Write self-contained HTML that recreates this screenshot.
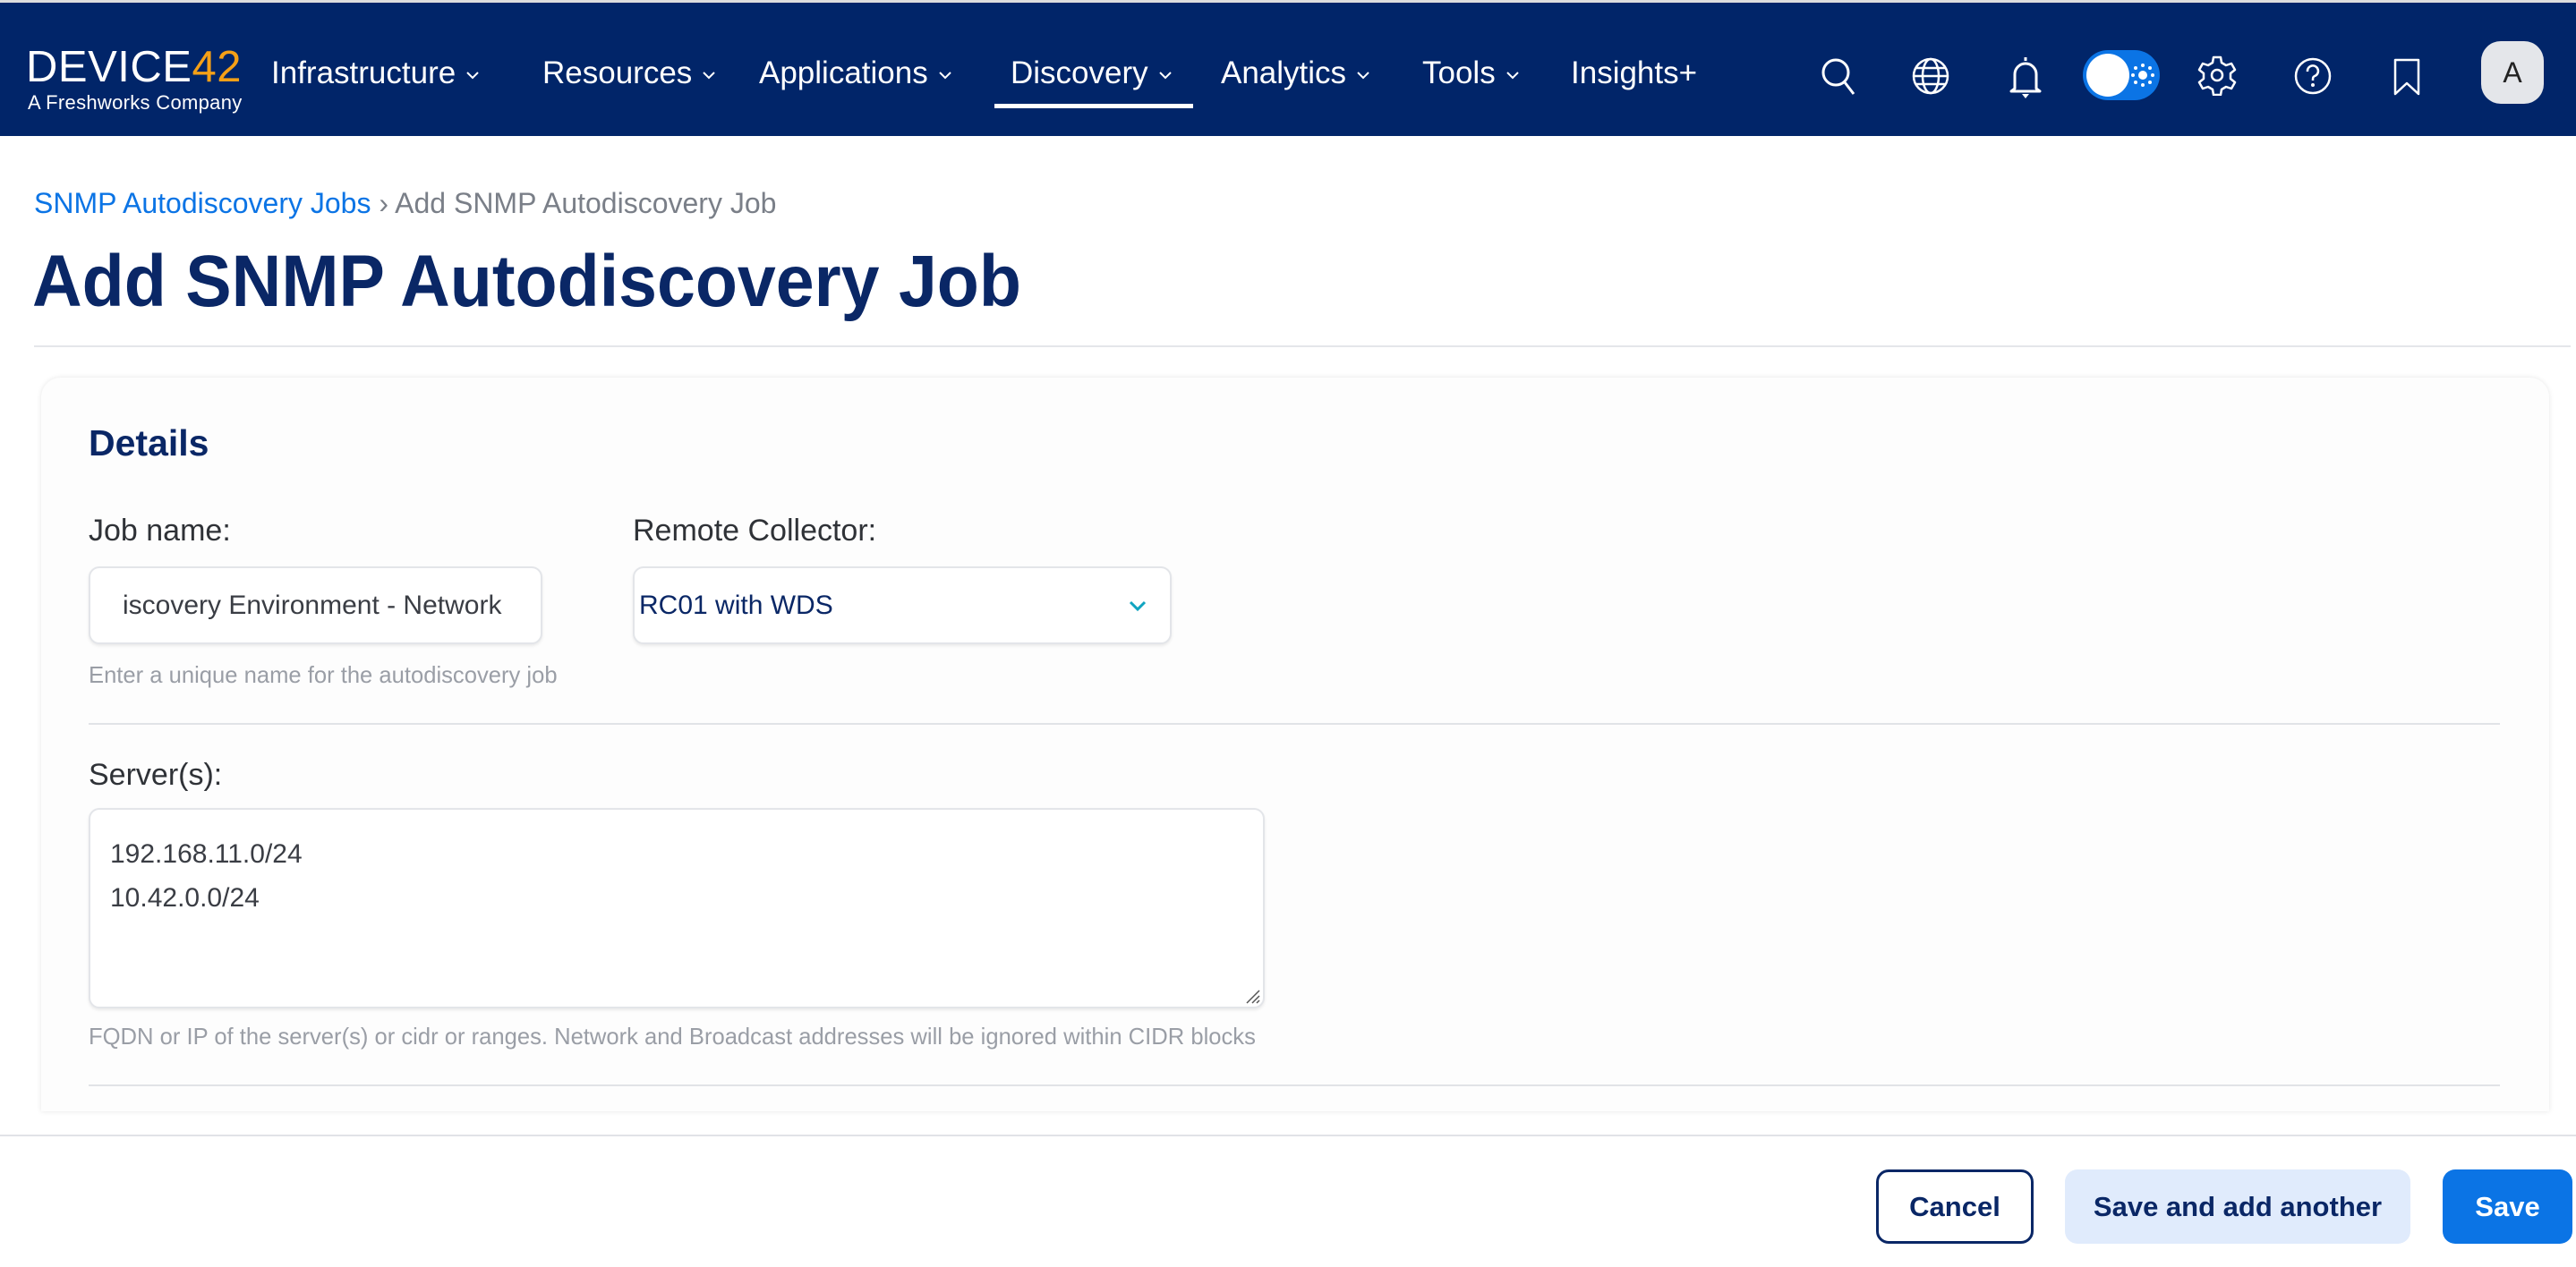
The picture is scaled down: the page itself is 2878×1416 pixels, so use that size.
<!DOCTYPE html>
<html><head><meta charset="utf-8"><style>
*{box-sizing:border-box;margin:0;padding:0}
body{width:2878px;height:1416px;overflow:hidden;background:#fff;font-family:"Liberation Sans",sans-serif;position:relative}
.a{position:absolute;white-space:nowrap}
.nav{position:absolute;left:0;top:3px;width:2878px;height:149px;background:#012569}
.ni{position:absolute;top:54px;color:#fff;font-size:35px;line-height:50px}
.ni svg{margin-left:10px;vertical-align:middle}
.ic{position:absolute;top:62px}
.lbl{color:#2f3237;font-size:34px}
.hint{color:#9a9ea6;font-size:25.6px}
.box{position:absolute;background:#fff;border:2px solid #e3e5e9;border-radius:12px;box-shadow:0 2px 3px rgba(0,0,0,.08)}
.div{position:absolute;height:2px;background:#e1e3e7}
.btn{position:absolute;top:1307px;height:83px;border-radius:14px;font-size:31px;font-weight:bold;line-height:83px;text-align:center}
</style></head><body>
<div class="a" style="left:0;top:0;width:2878px;height:3px;background:#ddd"></div>
<div class="nav">
  <div class="a" style="left:29px;top:48px;font-size:49px;color:#fff;letter-spacing:0.5px;line-height:49px">DEVICE<span style="color:#f5a017">42</span></div>
  <div class="a" style="left:31px;top:99px;font-size:22px;color:#fff;letter-spacing:0.3px">A Freshworks Company</div>
  <div class="ni" style="left:303px">Infrastructure<svg width="18" height="12" viewBox="0 0 18 12"><path d="M3 3l6 6 6-6" stroke="#fff" stroke-width="2" fill="none"/></svg></div>
  <div class="ni" style="left:606px">Resources<svg width="18" height="12" viewBox="0 0 18 12"><path d="M3 3l6 6 6-6" stroke="#fff" stroke-width="2" fill="none"/></svg></div>
  <div class="ni" style="left:848px">Applications<svg width="18" height="12" viewBox="0 0 18 12"><path d="M3 3l6 6 6-6" stroke="#fff" stroke-width="2" fill="none"/></svg></div>
  <div class="ni" style="left:1129px">Discovery<svg width="18" height="12" viewBox="0 0 18 12"><path d="M3 3l6 6 6-6" stroke="#fff" stroke-width="2" fill="none"/></svg></div>
  <div class="a" style="left:1111px;top:113px;width:222px;height:5px;background:#fff"></div>
  <div class="ni" style="left:1364px">Analytics<svg width="18" height="12" viewBox="0 0 18 12"><path d="M3 3l6 6 6-6" stroke="#fff" stroke-width="2" fill="none"/></svg></div>
  <div class="ni" style="left:1589px">Tools<svg width="18" height="12" viewBox="0 0 18 12"><path d="M3 3l6 6 6-6" stroke="#fff" stroke-width="2" fill="none"/></svg></div>
  <div class="ni" style="left:1755px">Insights+</div>
  <svg class="ic" style="left:2034px;top:60px" width="42" height="46" viewBox="0 0 42 46"><circle cx="17" cy="18" r="14" stroke="#fff" stroke-width="3" fill="none"/><path d="M27 29l10 13" stroke="#fff" stroke-width="3"/></svg>
  <svg class="ic" style="left:2135px;top:60px" width="44" height="44" viewBox="0 0 44 44"><circle cx="22" cy="22" r="19" stroke="#fff" stroke-width="2.5" fill="none"/><ellipse cx="22" cy="22" rx="9" ry="19" stroke="#fff" stroke-width="2.5" fill="none"/><path d="M3 22h38M6 13h32M6 31h32" stroke="#fff" stroke-width="2.5"/></svg>
  <svg class="ic" style="left:2243px;top:58px" width="40" height="50" viewBox="0 0 40 50"><path d="M20 3v4M8 38V22a12 12 0 0 1 24 0v16l4 3H4z" stroke="#fff" stroke-width="3" fill="none" stroke-linejoin="round"/><path d="M16 44h8l-4 5z" fill="#fff"/></svg>
  <div class="a" style="left:2327px;top:53px;width:86px;height:56px;border-radius:28px;background:#0b74e5"></div>
  <div class="a" style="left:2331px;top:57px;width:48px;height:48px;border-radius:50%;background:#fff"></div>
  <svg class="ic" style="left:2380px;top:67px" width="28" height="28" viewBox="0 0 28 28"><circle cx="14" cy="14" r="5" fill="#fff"/><g fill="#fff"><circle cx="14" cy="3" r="2"/><circle cx="14" cy="25" r="2"/><circle cx="3" cy="14" r="2"/><circle cx="25" cy="14" r="2"/><circle cx="6" cy="6" r="2"/><circle cx="22" cy="6" r="2"/><circle cx="6" cy="22" r="2"/><circle cx="22" cy="22" r="2"/></g></svg>
  <svg class="ic" style="left:2455px;top:58px" width="44" height="46" viewBox="0 0 44 46"><path d="M18 3h8l1 6 5 3 6-2 4 7-5 4v6l5 4-4 7-6-2-5 3-1 6h-8l-1-6-5-3-6 2-4-7 5-4v-6l-5-4 4-7 6 2 5-3z" stroke="#fff" stroke-width="2.5" fill="none" stroke-linejoin="round"/><circle cx="22" cy="23" r="6" stroke="#fff" stroke-width="2.5" fill="none"/></svg>
  <svg class="ic" style="left:2562px;top:60px" width="44" height="44" viewBox="0 0 44 44"><circle cx="22" cy="22" r="19" stroke="#fff" stroke-width="2.5" fill="none"/><path d="M16 17a6 6 0 1 1 8 5c-2 1-2 2-2 5" stroke="#fff" stroke-width="2.5" fill="none"/><circle cx="22" cy="32" r="2" fill="#fff"/></svg>
  <svg class="ic" style="left:2672px;top:60px" width="34" height="46" viewBox="0 0 34 46"><path d="M4 4h26v38L17 30 4 42z" stroke="#fff" stroke-width="2.5" fill="none" stroke-linejoin="round"/></svg>
  <div class="a" style="left:2772px;top:43px;width:70px;height:70px;border-radius:22px;background:#e4e6ea;color:#222;font-size:32px;line-height:70px;text-align:center">A</div>
</div>

<div class="a" style="left:38px;top:209px;font-size:32px;color:#7a7f88"><span style="color:#0b74e5">SNMP Autodiscovery Jobs</span> › Add SNMP Autodiscovery Job</div>
<div class="a" style="left:36px;top:274px;font-size:82px;line-height:82px;font-weight:bold;color:#0a2766;transform:scaleX(0.94);transform-origin:0 0">Add SNMP Autodiscovery Job</div>
<div class="div" style="left:38px;top:386px;width:2834px;background:#e4e6ea"></div>

<div class="a" style="left:46px;top:422px;width:2802px;height:820px;background:#fdfdfd;border-radius:22px 22px 0 0;box-shadow:0 0 6px rgba(0,0,0,.1)"></div>
<div class="a" style="left:99px;top:472px;font-size:41px;font-weight:bold;color:#0a2766">Details</div>
<div class="a lbl" style="left:99px;top:574px">Job name:</div>
<div class="a lbl" style="left:707px;top:574px">Remote Collector:</div>
<div class="box" style="left:99px;top:633px;width:507px;height:87px;overflow:hidden"><div class="a" style="left:36px;top:25px;font-size:30px;color:#3a3d44">iscovery Environment - Network</div></div>
<div class="box" style="left:707px;top:633px;width:602px;height:87px"><div class="a" style="left:5px;top:25px;font-size:30px;color:#0a2766">RC01 with WDS</div>
<svg class="a" style="left:551px;top:34px" width="22" height="16" viewBox="0 0 22 16"><path d="M3 4l8 8 8-8" stroke="#10a4c0" stroke-width="3" fill="none"/></svg></div>
<div class="a hint" style="left:99px;top:741px">Enter a unique name for the autodiscovery job</div>
<div class="div" style="left:99px;top:808px;width:2694px"></div>
<div class="a lbl" style="left:99px;top:847px">Server(s):</div>
<div class="box" style="left:99px;top:903px;width:1314px;height:224px">
<div class="a" style="left:22px;top:25px;font-size:30px;color:#3a3d44;line-height:49px">192.168.11.0/24<br>10.42.0.0/24</div>
<svg class="a" style="right:2px;bottom:2px" width="22" height="22" viewBox="0 0 22 22"><path d="M20 6L6 20M20 12l-8 8M20 17l-3 3" stroke="#555" stroke-width="1.5"/></svg></div>
<div class="a hint" style="left:99px;top:1145px">FQDN or IP of the server(s) or cidr or ranges. Network and Broadcast addresses will be ignored within CIDR blocks</div>
<div class="div" style="left:99px;top:1212px;width:2694px"></div>

<div class="div" style="left:0;top:1268px;width:2878px;background:#e1e3e7"></div>
<div class="btn" style="left:2096px;width:176px;border:3px solid #0a2766;color:#0a2766;background:#fff;line-height:77px">Cancel</div>
<div class="btn" style="left:2307px;width:386px;background:#e0ebfc;color:#0a2766">Save and add another</div>
<div class="btn" style="left:2729px;width:145px;background:#0b74e5;color:#fff">Save</div>
</body></html>
